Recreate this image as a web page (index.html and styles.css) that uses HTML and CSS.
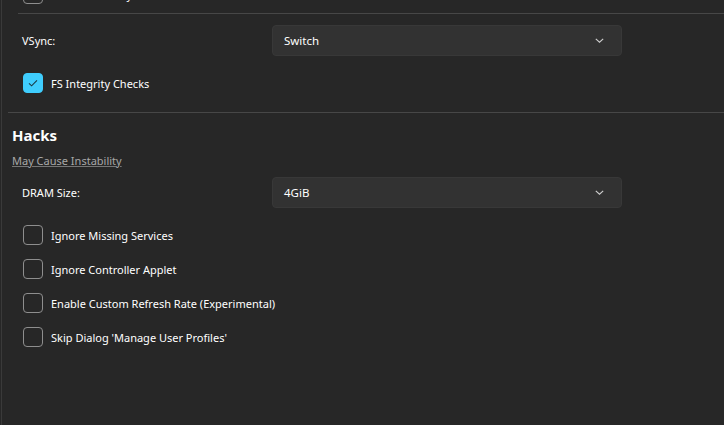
FILE: index.html
```html
<!DOCTYPE html>
<html>
<head>
<meta charset="utf-8">
<link rel="stylesheet" href="styles.css">
</head>
<body>
<div class="pane">
  <div class="row check top-cut">
    <span class="box"></span><span class="label">Enable Memory</span>
  </div>
  <div class="sep sep-inner"></div>
  <div class="row field">
    <span class="flabel">VSync:</span>
    <div class="select"><span>Switch</span>
      <svg class="chev" width="9" height="5" viewBox="0 0 9 5"><path d="M0.8 0.8 L4.5 4.2 L8.2 0.8" fill="none" stroke="#cfcfcf" stroke-width="1.1"/></svg>
    </div>
  </div>
  <div class="row check">
    <span class="box on"><svg width="12" height="10" viewBox="0 0 12 10"><path d="M2 5.4 L4.6 7.8 L10 2.4" fill="none" stroke="#1a3a46" stroke-width="1.1"/></svg></span><span class="label">FS Integrity Checks</span>
  </div>
  <div class="sep sep-outer"></div>
  <h2 class="title">Hacks</h2>
  <a class="warn">May Cause Instability</a>
  <div class="row field dram">
    <span class="flabel">DRAM Size:</span>
    <div class="select"><span>4GiB</span>
      <svg class="chev" width="9" height="5" viewBox="0 0 9 5"><path d="M0.8 0.8 L4.5 4.2 L8.2 0.8" fill="none" stroke="#cfcfcf" stroke-width="1.1"/></svg>
    </div>
  </div>
  <div class="list">
    <div class="row check"><span class="box"></span><span class="label">Ignore Missing Services</span></div>
    <div class="row check"><span class="box"></span><span class="label">Ignore Controller Applet</span></div>
    <div class="row check"><span class="box"></span><span class="label">Enable Custom Refresh Rate (Experimental)</span></div>
    <div class="row check"><span class="box"></span><span class="label">Skip Dialog 'Manage User Profiles'</span></div>
  </div>
</div>
</body>
</html>
```
FILE: styles.css
```css
html, body {
  margin: 0;
  padding: 0;
  background: #272727;
  width: 724px;
  height: 425px;
  overflow: hidden;
}
body {
  font-family: "Noto Sans", "Open Sans", sans-serif;
  font-size: 11px;
  color: #ffffff;
}
.pane {
  height: 425px;
  border-left: 1px solid #3a3a3a;
  margin-left: 1px;
  display: flex;
  flex-direction: column;
  overflow: hidden;
}
.row {
  display: flex;
  align-items: center;
}
.check {
  height: 20px;
  padding-left: 21px;
}
.top-cut {
  margin-top: -16px;
}
.box {
  width: 18px;
  height: 18px;
  border: 1px solid #8e8e8e;
  border-radius: 4px;
  box-sizing: content-box;
  flex: none;
  display: flex;
  align-items: center;
  justify-content: center;
}
.box.on {
  background: #3fcdfd;
  border-color: #3fcdfd;
}
.label {
  margin-left: 8px;
  white-space: nowrap;
}
.sep {
  height: 1px;
  background: #474747;
}
.sep-inner {
  margin: 9px 0 0 16px;
}
.sep-outer {
  margin: 19px 0 0 6px;
}
.field {
  padding-left: 20px;
  margin-top: 11px;
}
.flabel {
  width: 250px;
  flex: none;
}
.select {
  height: 29px;
  border: 1px solid #383838;
  background: #323232;
  border-radius: 4px;
  display: flex;
  align-items: center;
  justify-content: space-between;
  padding: 0 17px 0 11px;
  box-sizing: content-box;
  width: 320px;
  font-size: 11.5px;
}
.field + .check {
  margin-top: 17px;
}
.title {
  margin: 13px 0 0 10px;
  font-size: 15px;
  font-weight: 700;
  line-height: 18px;
}
.warn {
  margin: 9px 0 0 10px;
  color: #a8a8a8;
  text-decoration: underline;
  text-decoration-color: #777;
  line-height: 16px;
  align-self: flex-start;
}
.dram {
  margin-top: 8px;
}
.list {
  display: flex;
  flex-direction: column;
  gap: 14px;
  margin-top: 17px;
}
```
